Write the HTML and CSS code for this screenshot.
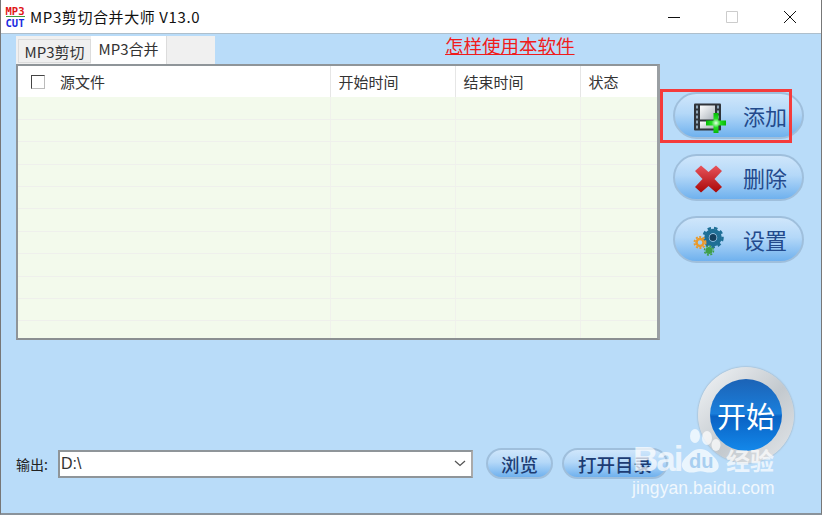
FILE: index.html
```html
<!DOCTYPE html>
<html>

<head>
    <title>MP3剪切合并大师 V13.0</title>
    <meta charset="utf-8">
    <link rel="stylesheet" href="styles.css">
</head>

<body>
    <div class="window">
        <div class="titlebar">
            <div class="logo">
                <span class="logo-mp3">MP3</span>
                <span class="logo-bar"></span>
                <span class="logo-cut">CUT</span>
            </div>
            <div class="title">MP3剪切合并大师 V13.0</div>
            <div class="win-buttons">
                <svg width="14" height="14" viewBox="0 0 14 14"><path d="M1 7.5h12" stroke="#111" fill="none"/></svg>
                <svg width="14" height="14" viewBox="0 0 14 14"><path d="M1.5 1.5h11v11h-11z" stroke="#ccc" fill="none"/></svg>
                <svg width="14" height="14" viewBox="0 0 14 14"><path d="M1 1l12 12M13 1L1 13" stroke="#111" fill="none"/></svg>
            </div>
        </div>

        <div class="content">
            <div class="main">
                <div class="left-panel">
                    <div class="tab-row">
                        <div class="tab-strip">
                            <div class="tab">MP3剪切</div>
                            <div class="tab active">MP3合并</div>
                        </div>
                        <a class="help-link" href="#">怎样使用本软件</a>
                    </div>
                    <div class="file-list">
                        <table>
                            <thead>
                                <tr>
                                    <th class="col-name"><span class="checkbox"></span>源文件</th>
                                    <th class="col-time">开始时间</th>
                                    <th class="col-time">结束时间</th>
                                    <th>状态</th>
                                </tr>
                            </thead>
                            <tbody>
                                <tr><td></td><td></td><td></td><td></td></tr>
                                <tr><td></td><td></td><td></td><td></td></tr>
                                <tr><td></td><td></td><td></td><td></td></tr>
                                <tr><td></td><td></td><td></td><td></td></tr>
                                <tr><td></td><td></td><td></td><td></td></tr>
                                <tr><td></td><td></td><td></td><td></td></tr>
                                <tr><td></td><td></td><td></td><td></td></tr>
                                <tr><td></td><td></td><td></td><td></td></tr>
                                <tr><td></td><td></td><td></td><td></td></tr>
                                <tr><td></td><td></td><td></td><td></td></tr>
                                <tr><td></td><td></td><td></td><td></td></tr>
                            </tbody>
                        </table>
                    </div>
                </div>

                <div class="side">
                    <div class="pill-btn big highlighted">
                        <svg class="btn-icon" width="46" height="36" viewBox="0 0 46 36">
                            <defs>
                                <linearGradient id="frame" x1="0" y1="0" x2="1" y2="1">
                                    <stop offset="0" stop-color="#fff"/>
                                    <stop offset="1" stop-color="#aab2ba"/>
                                </linearGradient>
                                <radialGradient id="plus" cx="0.5" cy="0.5" r="0.5">
                                    <stop offset="0" stop-color="#e8ffe8"/>
                                    <stop offset="0.45" stop-color="#22dd22"/>
                                    <stop offset="1" stop-color="#06b806"/>
                                </radialGradient>
                            </defs>
                            <rect x="6" y="5.500" width="27" height="27" rx="1" fill="#30343a"/>
                            <rect x="12" y="7.500" width="15" height="14" fill="url(#frame)"/>
                            <rect x="12" y="23.500" width="15" height="7" fill="url(#frame)"/>
                            <path d="M8 7.500h2v3h-2zM8 12.500h2v3h-2zM8 17.500h2v3h-2zM8 22.500h2v3h-2zM8 27.500h2v3h-2zM29 7.500h2v3h-2zM29 12.500h2v3h-2zM29 17.500h2v3h-2z" fill="#8fa6b8"/>
                            <path d="M25.500 15h5v7.500h7.500v5h-7.500v7.500h-5v-7.500h-7.500v-5h7.500z" fill="url(#plus)"/>
                        </svg>
                        <span>添加</span>
                    </div>
                    <div class="pill-btn big">
                        <svg class="btn-icon" width="46" height="36" viewBox="0 0 46 36">
                            <defs>
                                <linearGradient id="cross" x1="0" y1="0" x2="0" y2="1">
                                    <stop offset="0" stop-color="#e8545c"/>
                                    <stop offset="1" stop-color="#a80808"/>
                                </linearGradient>
                            </defs>
                            <path d="M13 5.500l7.500 6.500 7.500-6.500 6 5.500-7.500 8 7.500 8-6 5.500-7.500-6.500-7.500 6.500-6-5.500 7.500-8-7.500-8z" fill="url(#cross)"/>
                        </svg>
                        <span>删除</span>
                    </div>
                    <div class="pill-btn big">
                        <svg class="btn-icon" width="46" height="36" viewBox="0 0 46 36">
                            <circle cx="25" cy="15.500" r="6.500" fill="none" stroke="#1f6f96" stroke-width="4.500"/>
                            <circle cx="25" cy="15.500" r="9.500" fill="none" stroke="#1f6f96" stroke-width="2.500" stroke-dasharray="3.500 3"/>
                            <circle cx="25" cy="15.500" r="3.500" fill="#14405f"/>
                            <circle cx="12" cy="20.500" r="3.500" fill="none" stroke="#ea9a2c" stroke-width="2.500"/>
                            <circle cx="12" cy="20.500" r="5.500" fill="none" stroke="#ea9a2c" stroke-width="2" stroke-dasharray="2 1.500"/>
                            <circle cx="21" cy="28.500" r="3.500" fill="#3f9f4a"/>
                            <circle cx="21" cy="28.500" r="4.500" fill="none" stroke="#3f9f4a" stroke-width="1.500" stroke-dasharray="2 1.500"/>
                        </svg>
                        <span>设置</span>
                    </div>
                </div>
            </div>

            <div class="bottom">
                <div class="output">
                    <label>输出:</label>
                    <div class="select-box">
                        <span>D:\</span>
                        <svg width="12" height="7" viewBox="0 0 12 7"><path d="M1 1l5 4.500 5-4.500" stroke="#555" stroke-width="1.300" fill="none"/></svg>
                    </div>
                    <div class="pill-btn small browse">浏览</div>
                    <div class="pill-btn small open-dir">打开目录</div>
                </div>
                <div class="start-btn">
                    <div class="start-inner">开始</div>
                </div>
            </div>
        </div>

        <div class="watermark">
            <div class="wm-top">
                <svg class="wm-paw" width="44" height="46" viewBox="0 0 44 46">
                    <ellipse cx="14" cy="8" rx="5" ry="7" fill="#fff" opacity="0.7"/>
                    <ellipse cx="26" cy="10" rx="5" ry="7" fill="#fff" opacity="0.7"/>
                    <ellipse cx="35" cy="17" rx="4.500" ry="6" fill="#fff" opacity="0.7"/>
                    <path d="M19 21c7 0 10 4 14 8 5 5 6 10 3 13-3 3-8 3-12 2-3-1-6-1-9 0-4 1-9 1-12-2-4-4-2-9 2-13 5-4 7-8 14-8z" fill="#fff" opacity="0.7"/>
                </svg>
                <span class="wm-bai">Bai</span><span class="wm-du">du</span><span class="wm-jy">经验</span>
            </div>
            <div class="wm-url">jingyan.baidu.com</div>
        </div>
    </div>
</body>

</html>
```

FILE: styles.css
```css
* {
    box-sizing: border-box;
}

body {
    margin: 0;
    font-family: "Noto Sans CJK SC", "Liberation Sans", sans-serif;
    color: #222;
    overflow: hidden;
}

.window {
    position: relative;
    width: 822px;
    height: 515px;
    display: flex;
    flex-direction: column;
    background-color: #b9dcf9;
    border-left: 1px solid #777;
    border-right: 1px solid #777;
    border-bottom: 2px solid #8a939b;
    overflow: hidden;
}

/* title bar */
.titlebar {
    height: 34px;
    flex-shrink: 0;
    display: flex;
    align-items: center;
    background-color: #fff;
    border-bottom: 1px solid #aebfcc;
    padding-left: 4px;
}

.logo {
    width: 20px;
    height: 20px;
    display: flex;
    flex-direction: column;
    align-items: center;
    font-family: "DejaVu Sans Mono", monospace;
    font-size: 10.500px;
    font-weight: bold;
    line-height: 8px;
}

.logo-mp3 {
    color: #e01515;
}

.logo-bar {
    width: 19px;
    height: 2px;
    margin-top: 1px;
    background-color: #3c9a3c;
}

.logo-cut {
    color: #1a2ae0;
    margin-top: 2px;
}

.title {
    margin-left: 5px;
    font-size: 15px;
    letter-spacing: 0.600px;
    color: #111;
}

.win-buttons {
    margin-left: auto;
    display: flex;
    gap: 44px;
    padding-right: 24px;
}

/* main area */
.content {
    flex: 1;
    display: flex;
    flex-direction: column;
    padding: 2px 0 0 15px;
}

.main {
    display: flex;
}

.left-panel {
    width: 644px;
}

.tab-row {
    display: flex;
    height: 28px;
}

.tab-strip {
    width: 199px;
    display: flex;
    background-color: #f0f0f0;
    padding-left: 2px;
}

.tab {
    width: 73px;
    height: 24px;
    margin-top: 3px;
    border: 1px solid #dcdcdc;
    font-size: 15px;
    line-height: 23px;
    text-align: center;
    color: #333;
}

.tab.active {
    width: 76px;
    height: 28px;
    margin-top: 0;
    border: 0;
    border-right: 1px solid #dcdcdc;
    background-color: #fff;
    line-height: 26px;
}

.help-link {
    margin-left: 230px;
    font-size: 18.500px;
    line-height: 18px;
    color: #f01c1c;
    text-decoration: underline;
}

.file-list {
    height: 276px;
    border: 2px solid #8b8f92;
    border-right-width: 3px;
    border-color: #8f9599 #9a9fa3 #8b8f92 #8f9599;
    background-color: #f3faec;
    overflow: hidden;
}

table {
    width: 640px;
    border-collapse: collapse;
    table-layout: fixed;
}

th {
    height: 31px;
    padding: 0 0 0 8px;
    background-color: #fff;
    border-right: 1px solid #e6e6e6;
    font-size: 15px;
    font-weight: normal;
    text-align: left;
    color: #333;
}

th:last-child,
td:last-child {
    border-right: 0;
}

.col-name {
    width: 312px;
    padding-left: 13px;
}

.col-time {
    width: 125px;
}

.checkbox {
    display: inline-block;
    width: 14px;
    height: 14px;
    margin-right: 15px;
    border: 1px solid #444;
    border-right-color: #bbb;
    border-bottom-color: #bbb;
    vertical-align: -1px;
}

td {
    height: 22.400px;
    padding: 0;
    border-right: 1px solid #f0f1ec;
    border-bottom: 1px solid #eff0ec;
}

/* right buttons */
.side {
    display: flex;
    flex-direction: column;
    gap: 15px;
    padding: 56px 0 0 13px;
}

.pill-btn {
    display: flex;
    align-items: center;
    justify-content: center;
    background: linear-gradient(#cfe6fb, #b4d8f8 45%, #6fb1ee);
    border: 2px solid #9fbfdc;
    color: #234a8c;
}

.pill-btn.big {
    position: relative;
    width: 131px;
    height: 47px;
    border-radius: 24px;
    font-size: 22px;
    padding-left: 13px;
    justify-content: flex-start;
}

.pill-btn.big span {
    margin-left: 9px;
    margin-top: -2px;
}

.btn-icon {
    flex-shrink: 0;
}

/* red box is drawn over the screenshot around the add button */
.highlighted::after {
    content: "";
    position: absolute;
    left: -15px;
    top: -5px;
    width: 132px;
    height: 54px;
    box-sizing: border-box;
    border: 3px solid #f53b3b;
}

/* bottom row */
.bottom {
    display: flex;
    align-items: flex-end;
    margin-top: 27px;
}

.output {
    display: flex;
    align-items: center;
    height: 31px;
}

.output label {
    width: 42px;
    font-size: 14px;
    color: #222;
}

.select-box {
    width: 415px;
    height: 28px;
    display: flex;
    align-items: center;
    justify-content: space-between;
    padding: 0 5px 0 1px;
    background-color: #fff;
    border: 2px solid #8f9599;
    border-right-color: #aaa;
    font-family: "Liberation Sans", sans-serif;
    font-size: 16px;
    color: #333;
}

.pill-btn.small {
    height: 31px;
    border-radius: 16px;
    font-size: 18.500px;
    font-weight: 500;
    color: #1d3c73;
}

.browse {
    width: 67px;
    margin-left: 13px;
}

.open-dir {
    width: 106px;
    margin-left: 9px;
}

.start-btn {
    width: 96px;
    height: 96px;
    margin: 0 0 16px 30px;
    padding: 12px;
    border-radius: 50%;
    background: linear-gradient(135deg, #f4f6f8, #c3c9ce 55%, #e4e7ea);
    box-shadow: 0 0 2px #8f9ba5;
}

.start-inner {
    height: 100%;
    border-radius: 50%;
    background: linear-gradient(#1c63b6, #1a7fdc 48%, #0a62c4 52%, #1388ea);
    display: flex;
    align-items: center;
    justify-content: center;
    color: #fff;
    font-size: 29px;
    line-height: 1;
}

/* baidu watermark on top of everything */
.watermark {
    position: absolute;
    left: 631px;
    top: 425px;
    width: 170px;
    color: #fff;
    pointer-events: none;
}

.wm-top {
    position: relative;
    height: 50px;
    font-family: "Liberation Sans", sans-serif;
}

.wm-paw {
    position: absolute;
    left: 49px;
    top: 3px;
}

.wm-bai {
    position: absolute;
    left: 1px;
    top: 15px;
    font-size: 35px;
    line-height: 37px;
    letter-spacing: -2px;
    font-weight: bold;
    opacity: 0.7;
}

.wm-du {
    position: absolute;
    left: 57px;
    top: 25px;
    font-size: 20px;
    line-height: 22px;
    font-weight: bold;
    color: #a9cff0;
}

.wm-jy {
    position: absolute;
    left: 94px;
    top: 21px;
    font-family: "Noto Sans CJK SC", sans-serif;
    font-size: 24px;
    line-height: 28px;
    font-weight: bold;
    opacity: 0.7;
}

.wm-url {
    margin-top: 3px;
    font-family: "Liberation Sans", sans-serif;
    font-size: 17.500px;
    line-height: 20px;
    letter-spacing: 0.100px;
    opacity: 0.8;
}
```
